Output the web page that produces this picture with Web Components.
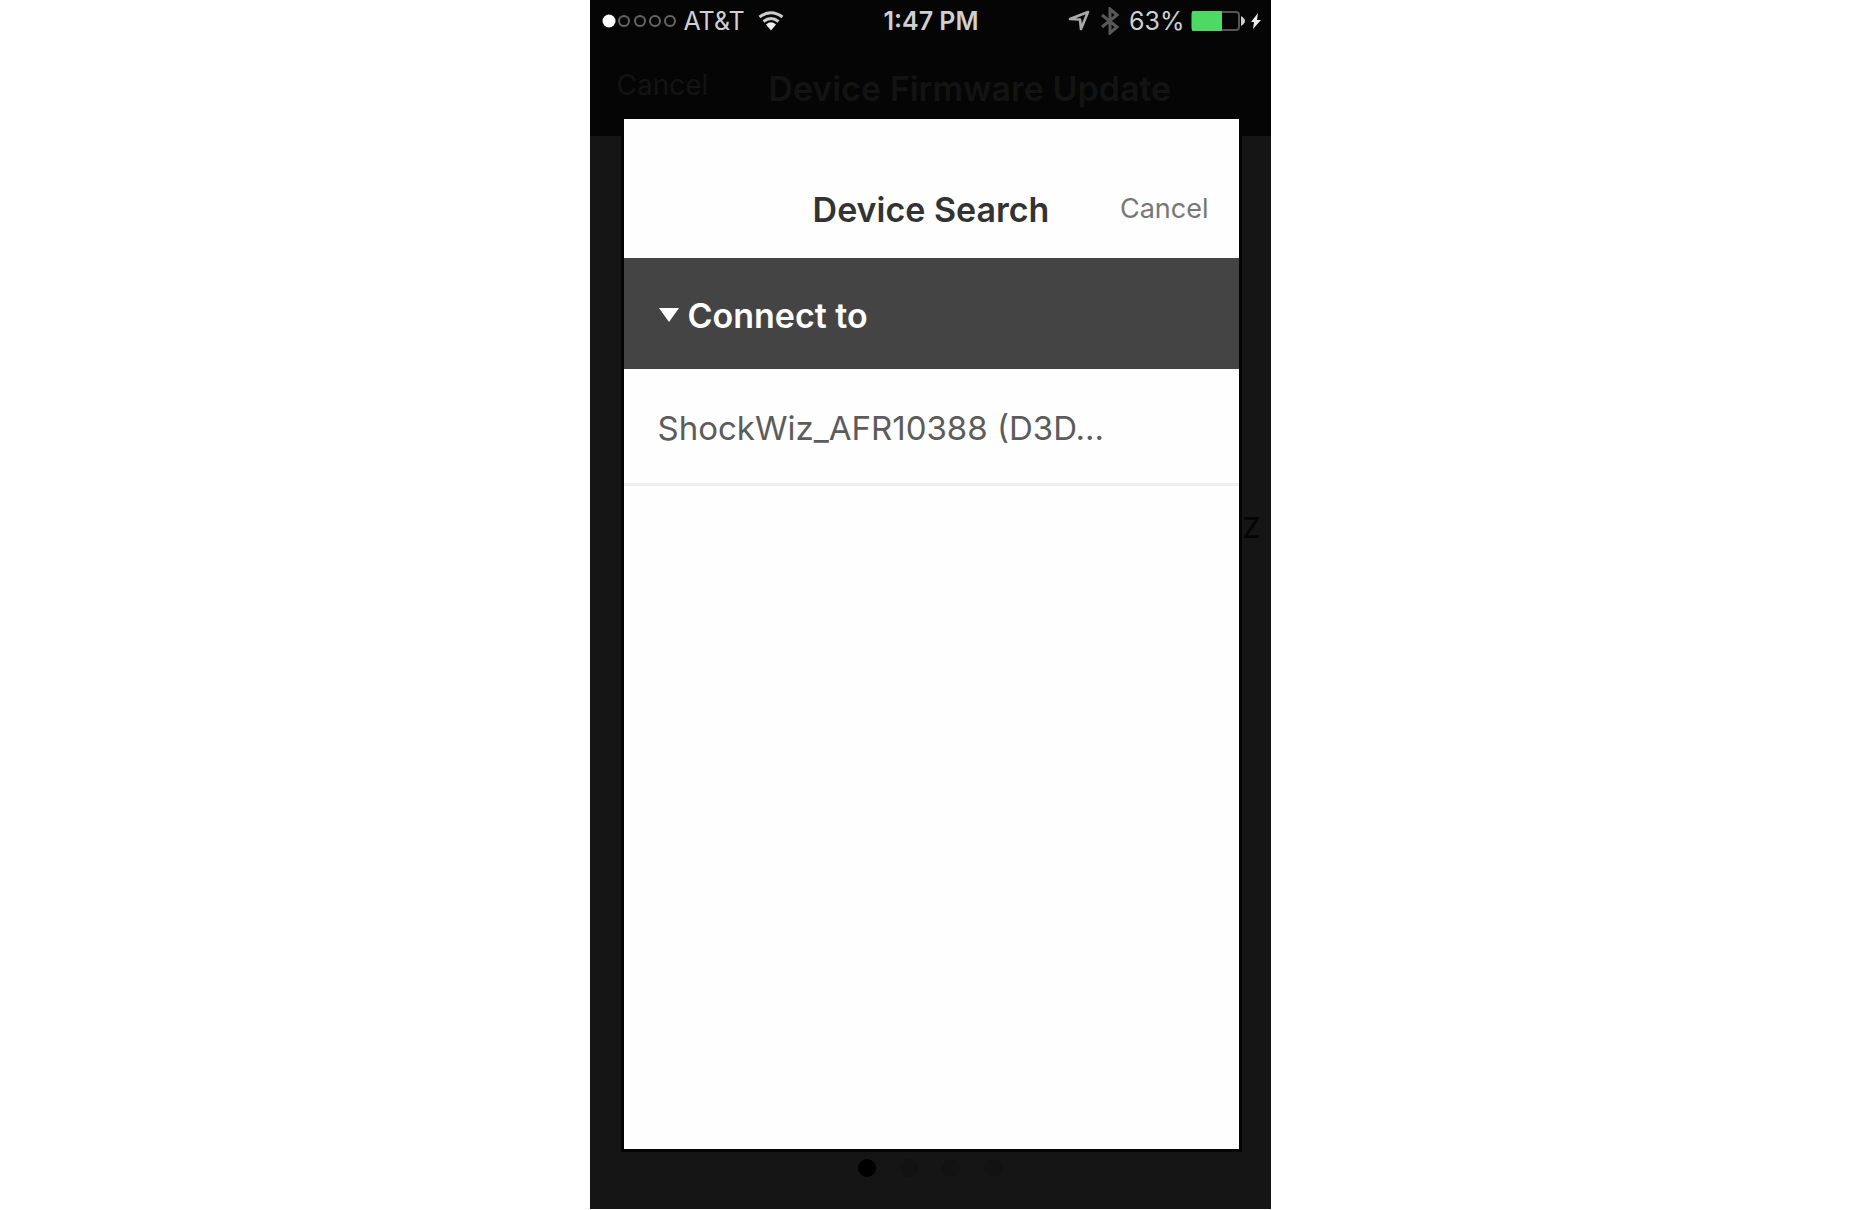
<!DOCTYPE html>
<html lang="en">
<head>
<meta charset="utf-8">
<meta name="viewport" content="width=device-width, initial-scale=1">
<title>Device Search</title>
<style>
  body {
    margin: 0;
    background: #fff;
    font-family: Inter, "Liberation Sans", sans-serif;
  }
</style>
</head>
<body>
<phone-screen>
  <status-bar slot="status" carrier="AT&amp;T" time="1:47 PM" battery="63"></status-bar>
  <update-page slot="page" heading="Device Firmware Update"></update-page>
  <search-dialog heading="Device Search">
    <device-group label="Connect to">
      <device-row>ShockWiz_AFR10388 (D3D...</device-row>
    </device-group>
  </search-dialog>
</phone-screen>

<script>
class PhoneScreen extends HTMLElement {
  constructor() {
    super();
    this.attachShadow({ mode: 'open' });
    this.shadowRoot.innerHTML = `
      <style>
        :host{
          display:flex;
          flex-direction:column;
          position:relative;
          box-sizing:border-box;
          width:100%;
          max-width:681px;
          min-height:calc(100vh - 1px);
          margin:0 auto;
          background:#151515;
          overflow:hidden;
        }
        ::slotted([slot="page"]){flex:1}
        .overlay{
          position:absolute;
          inset:119px 32px 60px 34px;
          display:flex;
        }
      </style>
      <slot name="status"></slot>
      <slot name="page"></slot>
      <div class="overlay"><slot></slot></div>
    `;
  }
}

class StatusBar extends HTMLElement {
  constructor() {
    super();
    this.attachShadow({ mode: 'open' });
  }

  connectedCallback() {
    const level = Number(this.getAttribute('battery'));
    this.shadowRoot.innerHTML = `
      <style>
        :host{
          display:grid;
          grid-template-columns:1fr auto 1fr;
          align-items:center;
          height:42px;
          padding:0 10px 0 12px;
          background:#050505;
          color:#d0d0d0;
          font-size:25px;
          line-height:28px;
        }
        .side{display:flex; align-items:center; gap:8px}
        .left svg:last-child{margin-left:4px}
        .right{justify-content:flex-end; gap:6px}
        .time{font-weight:600}
        svg{display:block; flex:none}
      </style>
      <div class="side left">
        <svg width="74" height="16" viewBox="0 0 74 16" role="img" aria-label="Signal">
          <circle cx="7" cy="8" r="6.5" fill="#fff"/>
          <g fill="none" stroke="#666" stroke-width="2">
            <circle cx="22" cy="8" r="5"/><circle cx="38" cy="8" r="5"/>
            <circle cx="53" cy="8" r="5"/><circle cx="68" cy="8" r="5"/>
          </g>
        </svg>
        <span>${this.getAttribute('carrier').replace('&', '&amp;')}</span>
        <svg width="28" height="22" viewBox="0 0 28 22" role="img" aria-label="Wi-Fi">
          <g fill="none" stroke="#ccc" stroke-width="3">
            <path d="M2.500 7Q14-1.500 25.500 7"/>
            <path d="M6.500 11.500Q14 5.500 21.500 11.500"/>
          </g>
          <path d="M9 14.500Q14 10 19 14.500L14 20.500Z" fill="#eee"/>
        </svg>
      </div>
      <span class="time">${this.getAttribute('time')}</span>
      <div class="side right">
        <svg width="24" height="22" viewBox="0 0 24 22" role="img" aria-label="Location">
          <path d="M3 9L21 2L14 19L13 9.500Z" fill="none" stroke="#aaa" stroke-width="2.600" stroke-linejoin="round"/>
        </svg>
        <svg width="26" height="28" viewBox="0 0 26 28" role="img" aria-label="Bluetooth">
          <path d="M5 8L20 20L13 26V2L20 8L5 20" fill="none" stroke="#585858" stroke-width="3"/>
        </svg>
        <span>${level}%</span>
        <svg width="70" height="22" viewBox="0 0 70 22" role="img" aria-label="Battery charging">
          <rect x="1" y="2" width="47" height="18" rx="3" fill="#050505" stroke="#555" stroke-width="2"/>
          <rect x="1" y="1" width="${Math.round(level * .48)}" height="20" rx="1" fill="#4cd964"/>
          <path d="M50 6Q58 11 50 16Z" fill="#ccc"/>
          <path d="M67 3L60 12H63L62 19L70 10H66Z" fill="#eee"/>
        </svg>
      </div>
    `;
  }
}

// Dimmed screen that stays behind the dialog
class UpdatePage extends HTMLElement {
  constructor() {
    super();
    this.attachShadow({ mode: 'open' });
  }

  connectedCallback() {
    this.shadowRoot.innerHTML = `
      <style>
        :host{display:flex; flex-direction:column; color:#131313}
        header{
          display:flex;
          align-items:center;
          gap:60px;
          height:94px;
          box-sizing:border-box;
          padding:0 27px;
          background:#050505;
        }
        button{
          border:0;
          padding:0 0 8px;
          background:none;
          color:inherit;
          font:400 28px/34px Inter, "Liberation Sans", sans-serif;
        }
        h1{margin:0; font-size:34px; line-height:40px; font-weight:600; white-space:nowrap}
        main{flex:1; padding:372px 10px 0; text-align:right}
        p{margin:0; font-size:28px; line-height:40px; font-weight:500; color:#050505}
        nav{display:flex; justify-content:center; gap:24px; height:50px}
        i{width:18px; height:18px; border-radius:50%; background:#121212}
        .current{background:#000}
      </style>
      <header>
        <button type="button">Cancel</button>
        <h1>${this.getAttribute('heading')}</h1>
      </header>
      <main><p>Z</p></main>
      <nav aria-label="Pages"><i class="current"></i><i></i><i></i><i></i></nav>
    `;
  }
}

class SearchDialog extends HTMLElement {
  constructor() {
    super();
    this.attachShadow({ mode: 'open' });
  }

  connectedCallback() {
    this.shadowRoot.innerHTML = `
      <style>
        :host{display:block; flex:1; min-width:0}
        section{
          height:100%;
          background:#fefefe;
          box-shadow:0 0 0 3px #050505;
        }
        header{
          display:grid;
          grid-template-columns:1fr auto 1fr;
          align-items:center;
          box-sizing:border-box;
          height:139px;
          padding:42px 30px 0;
        }
        h2{
          grid-column:2;
          margin:0;
          font-size:34px;
          line-height:40px;
          font-weight:600;
          color:#333;
        }
        button{
          justify-self:end;
          border:0;
          padding:0 0 2px;
          background:none;
          color:#777;
          font:400 27px/34px Inter, "Liberation Sans", sans-serif;
        }
      </style>
      <section role="dialog" aria-labelledby="title">
        <header>
          <h2 id="title">${this.getAttribute('heading')}</h2>
          <button type="button">Cancel</button>
        </header>
        <slot></slot>
      </section>
    `;
  }
}

class DeviceGroup extends HTMLElement {
  constructor() {
    super();
    this.attachShadow({ mode: 'open' });
  }

  connectedCallback() {
    this.shadowRoot.innerHTML = `
      <style>
        :host{display:block}
        button{
          display:flex;
          align-items:center;
          gap:8px;
          width:100%;
          height:111px;
          border:0;
          padding:4px 34px 0;
          background:#444;
          color:#fff;
          font:600 34px/40px Inter, "Liberation Sans", sans-serif;
        }
      </style>
      <button type="button" aria-expanded="true">
        <svg width="22" height="18" viewBox="0 0 22 18" aria-hidden="true">
          <path d="M1 1H21L11 15Z" fill="#fff"/>
        </svg>
        ${this.getAttribute('label')}
      </button>
      <slot></slot>
    `;
  }
}

class DeviceRow extends HTMLElement {
  constructor() {
    super();
    this.attachShadow({ mode: 'open' });
    this.shadowRoot.innerHTML = `
      <style>
        :host{display:block}
        button{
          width:100%;
          height:117px;
          border:0;
          border-bottom:3px solid #eee;
          padding:4px 34px 0;
          background:none;
          color:#5c5c5c;
          text-align:left;
          font:400 33px/40px Inter, "Liberation Sans", sans-serif;
        }
      </style>
      <button type="button"><slot></slot></button>
    `;
  }
}

customElements.define('phone-screen', PhoneScreen);
customElements.define('status-bar', StatusBar);
customElements.define('update-page', UpdatePage);
customElements.define('search-dialog', SearchDialog);
customElements.define('device-group', DeviceGroup);
customElements.define('device-row', DeviceRow);
</script>
</body>
</html>
